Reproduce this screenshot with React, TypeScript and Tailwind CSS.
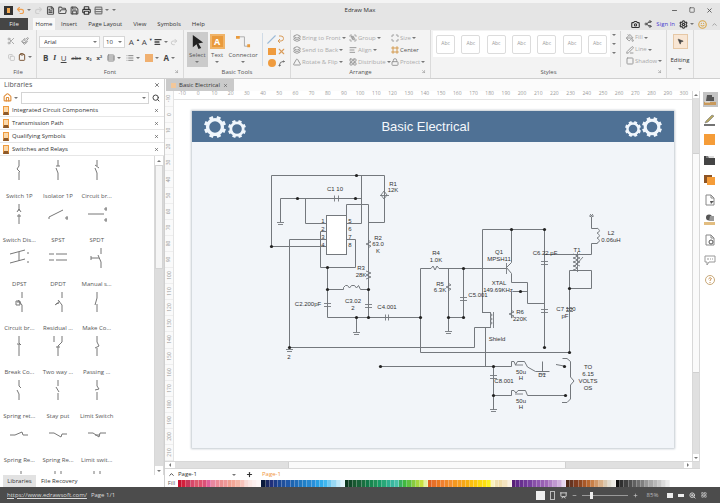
import React from "react";
import {
  AlignLeft, ArrowUpRight, Camera, ChevronUp, Clipboard, Copy, FileText, FolderOpen,
  Frame, Group, Home, Layers, List, LayoutGrid, Lock, Maximize, Minus, MousePointer2,
  Paintbrush, PaintBucket, PenLine, Plus, Presentation, Printer, Redo2, Rows3, Save, Scissors, Search, Settings,
  Share2, Slash, Smile, Spline, Square, Triangle, Undo2, X, ZoomIn,
} from "lucide-react";

type IconType = React.ComponentType<{ size?: number; className?: string; strokeWidth?: number; fill?: string }>;

const Caret = () => (
  <span className="h-0 w-0 shrink-0 border-x-[2px] border-t-[2px] border-x-transparent border-t-[#777]" />
);

const IconBtn = ({ icon: Icon, label, color = "text-[#555]", caret, size = 9 }: {
  icon: IconType; label: string; color?: string; caret?: boolean; size?: number;
}) => (
  <button aria-label={label} className="flex h-3 items-center justify-center gap-[2px]">
    <Icon size={size} className={color} strokeWidth={3} />
    {caret && <Caret />}
  </button>
);

const GroupBox = ({ title, className, corner, children }: {
  title: string; className: string; corner?: boolean; children: React.ReactNode;
}) => (
  <section className={`relative flex flex-col border-r border-[#dadada] ${className}`}>
    <div className="flex h-[37px] items-stretch">{children}</div>
    <h2 className="text-center leading-[10px] text-[#555]">{title}</h2>
    {corner && <ArrowUpRight size={5} className="absolute bottom-1 right-1 rotate-90 text-[#777]" />}
  </section>
);

const TitleBar = () => (
  <header className="relative flex h-[17px] items-center justify-between border-t-[3px] border-[#f4f4f4] bg-[#e5e5e5] px-1">
    <div className="flex items-center gap-[3px]">
      <button aria-label="Application" className="flex h-[9px] w-[9px] items-center justify-center bg-[#333]">
        <span className="h-[5px] w-[3px] bg-[#f5a94e]" />
      </button>
      <IconBtn icon={Undo2} label="Undo" color="text-[#f0a050]" caret />
      <IconBtn icon={Redo2} label="Redo" color="text-[#cfcfcf]" />
      <IconBtn icon={FileText} label="New" />
      <IconBtn icon={FolderOpen} label="Open" />
      <IconBtn icon={Save} label="Save" />
      <IconBtn icon={Printer} label="Print" color="text-[#333]" />
      <IconBtn icon={Rows3} label="Preview" color="text-[#777]" caret />
      <Caret />
    </div>
    <h1 className="absolute left-1/2 -translate-x-1/2 leading-[14px]">Edraw Max</h1>
    <div className="flex items-center gap-[11px] pr-[3px]">
      <IconBtn icon={Minus} label="Minimize" size={7} />
      <IconBtn icon={Square} label="Restore" size={6} />
      <IconBtn icon={X} label="Close" size={7} />
    </div>
  </header>
);

const TabBar = () => (
  <nav className="flex h-[13px] items-end bg-[#e5e5e5]">
    <button className="mr-[5px] h-3 w-7 bg-[#454545] text-[#eee]">File</button>
    <button className="h-3 w-[22px] bg-[#f8f8f8]">Home</button>
    <div className="flex flex-1 gap-[11px] pl-[6px]">
      {["Insert", "Page Layout", "View", "Symbols", "Help"].map((t) => (
        <button key={t} className="h-3">{t}</button>
      ))}
    </div>
    <div className="flex h-3 items-center gap-1 pr-[2px]">
      <IconBtn icon={Camera} label="Capture" color="text-[#333]" />
      <IconBtn icon={Share2} label="Share" size={8} />
      <a href="#signin" className="text-[#4a3ad0]">Sign In</a>
      <IconBtn icon={Settings} label="Settings" color="text-[#333]" caret />
      <IconBtn icon={Smile} label="Feedback" color="text-[#d9a648]" />
      <IconBtn icon={ChevronUp} label="Collapse ribbon" size={7} color="text-[#999]" />
    </div>
  </nav>
);

const FontCell = ({ label, caret, children }: { label: string; caret?: boolean; children: React.ReactNode }) => (
  <button aria-label={label} className="flex h-3 items-center justify-center gap-[2px] text-[8px] leading-3 text-[#444]">
    {children}
    {caret && <Caret />}
  </button>
);

const BigTool = ({ label, active, children }: { label: string; active?: boolean; children: React.ReactNode }) => (
  <button className={`flex h-[35px] flex-col items-center justify-between px-[2px] pb-1 pt-[2px] leading-[7px] text-[#555] ${active ? "bg-[#cbcbcb]" : ""}`}>
    {children}
    <span>{label}</span>
    <Caret />
  </button>
);

const ArrangeItem = ({ icon: Icon, label, on }: { icon: IconType; label: string; on?: boolean }) => (
  <button className={`flex h-3 items-center gap-[1px] whitespace-nowrap ${on ? "text-[#555]" : "text-[#aaa]"}`}>
    <Icon size={8} className={on ? "text-[#d39a4e]" : "text-[#999]"} strokeWidth={3} />
    {label}
    {!on && <Caret />}
  </button>
);

const Ribbon = () => (
  <div className="flex h-[49px] border-b border-[#cfcfcf] bg-[#f3f3f3]">
    <GroupBox title="File" className="w-[37px]">
      <div className="grid flex-1 grid-cols-2 place-items-center gap-y-1 px-1 pb-1 pt-[5px]">
        <IconBtn icon={Scissors} label="Cut" size={8} color="text-[#aaa]" />
        <IconBtn icon={Paintbrush} label="Format painter" size={8} color="text-[#999]" />
        <IconBtn icon={Copy} label="Copy" size={7} color="text-[#c4c4c4]" />
        <IconBtn icon={Clipboard} label="Paste" size={8} caret color="text-[#7d5a3a]" />
      </div>
    </GroupBox>
    <GroupBox title="Font" className="w-[147px]" corner>
      <div className="flex flex-1 flex-col justify-center gap-1 pl-[2px] pr-1 pt-[2px]">
        <div className="flex items-center gap-[3px]">
          <div className="flex h-3 w-[61px] items-center border border-[#d6d6d6] bg-white pr-[2px]">
            <select aria-label="Font" className="w-full appearance-none pl-1 leading-[10px]"><option>Arial</option></select>
            <Caret />
          </div>
          <div className="flex h-3 w-[22px] items-center border border-[#d6d6d6] bg-white pr-[2px]">
            <select aria-label="Font size" className="w-full appearance-none pl-[2px] leading-[10px]"><option>10</option></select>
            <Caret />
          </div>
          <div className="flex flex-1 justify-around">
            <FontCell label="Grow font">A<sup className="text-[4px]">▲</sup></FontCell>
            <FontCell label="Shrink font">A<sup className="text-[4px]">▼</sup></FontCell>
            <FontCell label="Text align" caret><AlignLeft size={8} strokeWidth={4} /></FontCell>
            <IconBtn icon={Redo2} label="Rotate text" color="text-[#ccc]" size={8} />
          </div>
        </div>
        <div className="flex items-center justify-between pl-1 pr-1">
          <FontCell label="Bold"><b>B</b></FontCell>
          <FontCell label="Italic"><i className="font-serif font-bold">I</i></FontCell>
          <FontCell label="Underline"><u>U</u></FontCell>
          <FontCell label="Strikethrough"><s className="text-[6px]">abc</s></FontCell>
          <FontCell label="Subscript"><span className="text-[6px] font-bold">x₂</span></FontCell>
          <FontCell label="Superscript"><span className="text-[6px] font-bold">x²</span></FontCell>
          <IconBtn icon={Rows3} label="Line spacing" caret size={8} color="text-[#888]" />
          <IconBtn icon={List} label="Bullets" caret size={8} color="text-[#888]" />
          <FontCell label="Highlight" caret><span className="h-2 w-2 bg-[#f0b070]" /></FontCell>
          <FontCell label="Font color" caret><b>A</b></FontCell>
        </div>
      </div>
    </GroupBox>
    <GroupBox title="Basic Tools" className="w-[107px]">
      <div className="flex flex-1 pl-[3px] pt-[2px]">
        <BigTool label="Select" active>
          <svg viewBox="0 0 16 16" className="h-[15px] w-[15px]"><path d="M3 1L14 9L9 10L12 15L9 16L7 11L3 14Z" fill="#222" /></svg>
        </BigTool>
        <BigTool label="Text">
          <span className="flex h-[15px] w-[15px] items-center justify-center border-2 border-[#f0b468] bg-[#e99a3c] text-[9px] font-bold text-white">A</span>
        </BigTool>
        <BigTool label="Connector">
          <svg viewBox="0 0 16 16" className="h-[15px] w-[15px]" fill="none" stroke="#aaa">
            <path d="M2 3H9V13H13" />
            <path d="M0 2h4v3H0zM12 11h3v3h-3z" fill="#e99a3c" stroke="none" />
          </svg>
        </BigTool>
        <div className="my-[1px] ml-[2px] grid flex-1 grid-cols-2 place-items-center border-l border-[#d0dbe6] px-1">
          <IconBtn icon={Slash} label="Line" color="text-[#9dbbd8]" />
          <button aria-label="Arc">
            <svg viewBox="0 0 8 8" className="h-2 w-2" fill="none" stroke="#d99c5a"><path d="M2 1H4a2.5 2.5 0 0 1 0 5H1M3 4L1 6L3 8" /></svg>
          </button>
          <button aria-label="Rectangle" className="h-[7px] w-2 bg-[#ef9b3e]" />
          <IconBtn icon={X} label="Point" color="text-[#d99c5a]" />
          <button aria-label="Ellipse" className="h-2 w-2 rounded-full bg-[#ef9b3e]" />
          <IconBtn icon={Spline} label="Curve" size={7} color="text-[#666]" />
        </div>
      </div>
    </GroupBox>
    <GroupBox title="Arrange" className="w-[140px]" corner>
      <div className="grid flex-1 grid-cols-[56px_42px_1fr] pl-[2px] pt-[2px]">
        <ArrangeItem icon={Layers} label="Bring to Front" />
        <ArrangeItem icon={Group} label="Group" />
        <ArrangeItem icon={Maximize} label="Size" />
        <ArrangeItem icon={Layers} label="Send to Back" />
        <ArrangeItem icon={AlignLeft} label="Align" />
        <ArrangeItem icon={Frame} label="Center" on />
        <ArrangeItem icon={Triangle} label="Rotate & Flip" />
        <ArrangeItem icon={LayoutGrid} label="Distribute" />
        <ArrangeItem icon={Lock} label="Protect" />
      </div>
    </GroupBox>
    <GroupBox title="Styles" className="min-w-[236px] flex-1" corner>
      <div className="flex flex-1 pl-[2px] pt-[1px]">
        <div className="flex h-[26px] flex-1 items-center justify-around bg-white">
          {[1, 2, 3, 4, 5, 6, 7].map((n) => (
            <button key={n} aria-label={`Style ${n}`} className="h-[19px] w-[19px] rounded-[2px] border border-[#dcdcdc] text-[5px] text-[#999]">Abc</button>
          ))}
        </div>
        <div className="flex h-[26px] w-2 flex-col items-center justify-around">
          <Caret /><Caret /><Caret />
        </div>
        <div className="ml-[2px] flex w-[46px] flex-col border-l border-[#d6d6d6] pl-[5px] pt-[1px]">
          <ArrangeItem icon={PaintBucket} label="Fill" />
          <ArrangeItem icon={PenLine} label="Line" />
          <ArrangeItem icon={Square} label="Shadow" />
        </div>
      </div>
    </GroupBox>
    <div className="w-[27px] border-r border-[#dadada] pt-1">
      <button className="flex w-full flex-col items-center">
        <span className="flex h-[15px] w-[15px] items-center justify-center border border-[#e6c8a6] bg-[#f8e6d4]">
          <MousePointer2 size={7} fill="currentColor" className="text-[#444]" />
        </span>
        <span className="mb-1 mt-[7px] leading-2">Editing</span>
        <Caret />
      </button>
    </div>
    <div className="w-[26px]" />
  </div>
);

const libraries = ["Integrated Circuit Components", "Transmission Path", "Qualifying Symbols", "Switches and Relays"];

const symbols: [string, string][] = [
  ["Switch 1P", "M10 0V6L8 9L11 12M10 12V20"],
  ["Isolator 1P", "M10 0V6M8 6h4M8 8L10 13V20"],
  ["Circuit br...", "M10 0V6M8 5l4 3M8 8L10 13V20"],
  ["Switch Dis...", "M10 0V7M8 8l2-3 2 3M10 10V20M8 12h4"],
  ["SPST", "M1 13L15 6M0 14h2M18 13h2v2h-2z"],
  ["SPDT", "M1 10H17M18 4h2v2h-2zM18 15h2v2h-2z"],
  ["DPST", "M1 6L16 2M1 15L16 11M18 5h2M18 14h2M10 4v9"],
  ["DPDT", "M1 6h5M8 6h11M1 12h5M8 12h11"],
  ["Manual s...", "M14 0V6M14 14V20M14 14L11 7M4 10h8M4 8v4"],
  ["Circuit br...", "M13 0V6M13 13V20M13 13L9 8M7 9h4v4h-4zM8 10h3v2"],
  ["Residual ...", "M14 0V6M14 13V20M14 13L10 8M7 13L12 9M8 12l3-1"],
  ["Make Co...", "M10 0V6M10 6L8 13M10 12V20"],
  ["Break Co...", "M10 0V7L12 9M10 8V20M8 8h3"],
  ["Two way ...", "M6 0V6M14 0V6L10 10V20M8 11h4"],
  ["Passing ...", "M10 0V6M10 6L12 10L8 12M10 12V20"],
  ["Spring ret...", "M10 0V6L12 8M8 10L10 14V20"],
  ["Stay put", "M10 0V6M8 7L11 12M10 13V20"],
  ["Limit Switch", "M10 0V6L12 9L8 10M10 12V20"],
  ["Spring Re...", "M1 11H6L13 8L14 11H19"],
  ["Spring Re...", "M1 9H6L13 13L14 10H19"],
  ["Limit swit...", "M1 9H6L12 13L13 9H19M8 11h5"],
];

const partialSymbols = ["M12 6v3", "M7 6v3M13 6v3", "M7 6v3M13 6v3"];

const LibraryPanel = () => (
  <aside className="flex w-[165px] shrink-0 flex-col border-r border-[#cfcfcf] bg-white">
    <div className="flex h-3 items-center justify-between pl-1 pr-[4px]">
      <h2 className="text-[7px] text-[#555]">Libraries</h2>
      <IconBtn icon={X} label="Close panel" size={6} />
    </div>
    <div className="flex h-[13px] items-center gap-[3px] pl-[3px] pr-1">
      <IconBtn icon={Home} label="Library home" size={9} color="text-[#e08f3c]" caret />
      <div className="flex h-3 flex-1 items-center border border-[#d4d4d4] pr-[2px]">
        <input aria-label="Search libraries" className="w-full min-w-0 bg-transparent px-1 outline-none" />
        <Caret />
      </div>
      <IconBtn icon={Search} label="Search" size={8} color="text-[#444]" />
    </div>
    {libraries.map((l) => (
      <div key={l} className="flex h-[13px] shrink-0 items-center gap-[3px] border-b border-[#e6e6e6] pl-[3px] pr-[5px]">
        <span className="h-[9px] w-[6px] shrink-0 border border-b-[3px] border-[#ef9b3e] border-b-[#8d5a2b] bg-[#fbd9ac]" />
        <button className="flex-1 text-left">{l}</button>
        <IconBtn icon={X} label={`Close ${l}`} size={5} />
      </div>
    ))}
    <div className="flex min-h-0 flex-1">
      <div className="flex-1 overflow-hidden pt-[1px]">
        <div className="grid w-[116px] auto-rows-[44px] grid-cols-3">
          {symbols.map(([name, d], i) => (
            <button key={i} className="flex flex-col items-center justify-between pb-[1px] pt-[3px] text-[#555]">
              <svg viewBox="0 0 20 20" className="h-5 w-5" fill="none" stroke="#777"><path d={d} /></svg>
              <span className="whitespace-nowrap leading-2">{name}</span>
            </button>
          ))}
        </div>
        <div className="grid h-[10px] w-[116px] grid-cols-3 justify-items-center">
          {partialSymbols.map((d, i) => (
            <svg key={i} viewBox="0 0 20 10" className="h-[10px] w-5" fill="none" stroke="#777"><path d={d} /></svg>
          ))}
        </div>
      </div>
      <div className="flex w-[10px] flex-col border-x border-[#d8d8d8] bg-[#dddddd]">
        <button aria-label="Scroll up" className="flex h-[9px] items-center justify-center bg-white"><span className="flex rotate-180"><Caret /></span></button>
        <div className="h-[104px] border border-[#d4d4d4] bg-[#f5f5f5]" />
        <div className="flex-1" />
        <button aria-label="Scroll down" className="flex h-[9px] items-center justify-center bg-white"><Caret /></button>
      </div>
    </div>
    <div className="flex h-3 text-[#333]">
      <button className="ml-[3px] w-[33px] bg-[#e2e2e2]">Libraries</button>
      <button className="px-[5px]">File Recovery</button>
    </div>
  </aside>
);

const Gears = ({ mirror }: { mirror?: boolean }) => {
  const gears = mirror ? [[13, 16, 9], [32, 14, 11]] : [[12, 14, 12], [34, 16, 10]];
  return (
    <svg viewBox="0 0 44 28" className="h-7 w-11" fill="none" stroke="#f0f6fc">
      {gears.map(([x, y, r]) => (
        <g key={x}>
          {[22, 67, 112, 157].map((a) => (
            <path key={a} d={`M${x} ${y - r + 1}V${y - r + 4}M${x} ${y + r - 1}V${y + r - 4}`} strokeWidth={r / 3} transform={`rotate(${a} ${x} ${y})`} />
          ))}
          <circle cx={x} cy={y} r={r * 0.62} strokeWidth={r * 0.28} />
        </g>
      ))}
    </svg>
  );
};

const wires = [
  "M271.5 246.5V175.5H384.5V222.5H368.5", "M270.5 246.5H326", "M280.5 222V198.5H361.5", "M305.5 198.5V223.5H326",
  "M361.5 175.5V223.5H347", "M346.5 215.5V204.5H368.5V318", "M326 231.5H320.5V267.5H355.5V239.5H347",
  "M326 239.5H289.5V347.5H474.5V327.5H490.5", "M327.5 267.5V317.5H420.5", "M327.5 289.5H343.5V287.5L345.5 285.5H347.5L349.5 288L351.5 285.5H354.5L356.5 288L358.5 285.5L360.5 289.5H368.5",
  "M356.5 317.5V332", "M420.5 352.5V268.5H431L433 266L435 270L437 266L439 268.5H506", "M420.5 352.5H569.5V270.5H591.5V288.5H569.5",
  "M448.5 268.5V331", "M463.5 268.5V317.5H448.5", "M482.5 313V229.5H544.5V347", "M482.5 312.5H490.5",
  "M485.5 327.5V366.5", "M511.5 229.5V262.5L506.5 267.5L511.5 273.5V282.5H527.5V303.5H544.5",
  "M544.5 254.5H591.5V243.5H597.5M597.5 228.5H591.5V217", "M512.5 291.5H527.5M511.5 291.5V318",
  "M380.5 366.5H511.5V361.5H514L515.5 365L517.5 361.5H522L524.5 361.5L527.5 367L535.5 371.5H549.5M542.5 361.5V371.5",
  "M493.5 366.5V410", "M493.5 395.5H511.5V390.5H514L516 393L518 390.5H525.5L527.5 395.5H565", "M556 364.5L564 366",
  "M562.5 358.5H567L570.5 361.5V377L574 381L570.5 385V399L567 402.5H562",
];
const parts = [
  "M334.5 195.5V201.5M338.5 195.5V201.5", "M324 303.5H331M324 306.5H331", "M365 304.5H372M365 307.5H372", "M385.5 314.5V320.5M388.5 314.5V320.5",
  "M460 297.5H467M460 300.5H467", "M541 261.5H548M541 264.5H548", "M541 309.5H548M541 312.5H548", "M566 308.5H573M566 311.5H573", "M490 375.5H497M490 378.5H497",
  "M277 222.5H284M278 224.5H283", "M353 332.5H360M354 334.5H359", "M445 331.5H452M446 333.5H451", "M490 409.5H497M491 411.5H496", "M286 349.5H293M287 351.5H292",
  "M368 240l3 2-5 2 5 2-3 2", "M366 271l5 2-5 2 5 2-5 2", "M448 283l3 2-5 2 5 2-3 2", "M511 310l3 2-5 2 5 2-3 2", "M384 191l3 4-3 4-3-4zM380 195.5h9",
  "M490.5 312V328M490 313q4 2 0 4q4 2 0 4q4 2 0 4M493.5 312V328", "M597 228q5 3 0 5q5 3 0 5q5 3 0 5",
  "M573 254q8 2 0 4q8 2 0 4q8 2 0 4q8 2 0 4M577.5 252V272M575 266L583 257M580 254q-6 2 0 4q-6 2 0 4q-6 2 0 4",
  "M506.5 263V274M589 216h5M590 214l3 3M593 214l-3 3M539 374h7M515 365h8M515 394h8",
];
const dots = [
  [356, 175], [271, 246], [297, 198], [355, 198], [327, 267], [327, 289], [368, 289], [356, 317], [368, 317], [420, 317], [289, 347],
  [448, 317], [463, 317], [463, 268], [511, 229], [544, 229], [544, 347], [569, 288], [569, 352], [520, 291], [380, 366], [493, 366], [493, 395],
  [564, 366], [565, 395],
];
const labels: [number, number, string][] = [
  [393, 184, "R1"], [393, 190, "12K"], [335, 189, "C1 10"], [378, 238, "R2"], [378, 244, "63.0"], [378, 251, "K"], [361, 268, "R3"], [361, 275, "28K"],
  [308, 304, "C2.200pF"], [353, 301, "C3.02"], [353, 308, "2"], [387, 307, "C4.001"], [436, 253, "R4"], [436, 260, "1.0K"], [440, 284, "R5"],
  [440, 290, "6.3K"], [478, 295, "C5.001"], [499, 252, "Q1"], [499, 259, "MPSH11"], [499, 283, "XTAL"], [498, 290, "149.69KHz"], [520, 312, "R6"],
  [520, 319, "220K"], [497, 339, "Shield"], [545, 253, "C6.22 pF"], [577, 250, "T1"], [611, 233, "L2"], [611, 240, "0.06uH"], [566, 309, "C7 100"],
  [565, 316, "pF"], [521, 372, "50u"], [521, 378, "H"], [542, 375, "D1"], [504, 381, "C8.001"], [521, 401, "50u"], [521, 407, "H"], [588, 367, "TO"],
  [588, 374, "6.15"], [588, 381, "VOLTS"], [588, 388, "OS"], [323, 221, "1"], [323, 229, "2"], [323, 237, "3"], [323, 245, "4"], [350, 221, "5"],
  [350, 229, "6"], [350, 237, "7"], [350, 245, "8"], [289, 357, "2"],
];

const Circuit = () => (
  <svg viewBox="192 142 482 306" className="block w-full" role="img" aria-label="Basic electrical circuit">
    <g fill="none" stroke="#74787d">
      {wires.map((d) => <path key={d} d={d} />)}
      {parts.map((d) => <path key={d} d={d} strokeWidth="0.9" />)}
    </g>
    <rect x="326.5" y="215.5" width="20" height="39" fill="#fff" stroke="#74787d" />
    {dots.map(([x, y]) => <circle key={`${x}-${y}`} cx={x + 0.5} cy={y + 0.5} r="1.6" fill="#222" />)}
    <g fill="#333" textAnchor="middle" fontFamily="Liberation Sans, Arial, sans-serif" fontSize="6">
      {labels.map(([x, y, t]) => <text key={`${x}-${y}`} x={x} y={y + 2}>{t}</text>)}
    </g>
  </svg>
);

const hTicks = Array.from({ length: 32 }, (_, i) => (i - 1) * 10);
const vTicks = Array.from({ length: 23 }, (_, i) => (i - 1) * 10);

const swatches = [
  ["#c8102e", "#d3203c", "#c8385a", "#d8486a", "#dc5a6c", "#e0506e", "#dc5078", "#e0609a", "#e888a0", "#ec8c98", "#ec9090", "#f09898", "#f0a090", "#f4a898", "#f4b8a8", "#f8c4bc", "#f8dcd8", "#fbe8e4", "#fcefee", "#fdf6f5"],
  ["#0a1a3c", "#1a2860", "#20307c", "#1c3c88", "#1c4894", "#20509c", "#2058a8", "#1c64b0", "#206cb8", "#2078c0", "#2080c8", "#2888d0", "#2890dc", "#28a0e4", "#30acec", "#40b8f0", "#70c8f0", "#98d8f4", "#c0e8f8", "#e0f4fc"],
  ["#0c3820", "#104828", "#185830", "#186038", "#187040", "#107848", "#188850", "#209058", "#189c68", "#28a878", "#30b090", "#38b8a0", "#48c0a8", "#38b060", "#40b840", "#60c040", "#88cc40", "#a8d840", "#c8e040", "#e4f0a0"],
  ["#e06020", "#e87028", "#ec7820", "#f08030", "#f08828", "#f49030", "#f49820", "#f8a020", "#f8a818", "#f8b010", "#fcc010", "#fcc810", "#fcd810", "#fce010", "#fcf020", "#fbf3c0", "#f0e0b0", "#f0dca8", "#f4e4c0", "#faf0e0"],
  ["#582078", "#602888", "#683090", "#703898", "#7840a0", "#8850a8", "#9058b0", "#9860b4", "#a068b8", "#b080c4", "#c098d0", "#d0b0dc", "#e8d8f0"],
  ["#502818", "#683420", "#803c20", "#904820", "#a85828", "#b86830", "#c88048", "#d09868", "#d8b088", "#d8c8b0", "#e0dcd0", "#eceae4"],
  ["#101010", "#303030", "#404040", "#505050", "#606060", "#707070", "#808080", "#989898", "#a8a8a8", "#b8b8b8", "#c8c8c8", "#dcdcdc", "#ececec"],
].flat();

const Workspace = () => (
  <main className="flex min-w-0 flex-1 flex-col bg-white">
    <div className="flex h-3 bg-[#fbfbfb] pl-[1px]">
      <button className="flex h-3 w-[68px] items-center gap-[3px] bg-[#cacaca] pl-[5px]">
        <span className="h-[5px] w-[5px] bg-[#f2c79a]" />
        <span className="whitespace-nowrap">Basic Electrical</span>
        <X size={5} />
      </button>
    </div>
    <div className="flex min-h-0 flex-1 overflow-hidden">
      <div className="flex w-[9px] flex-col border-r border-[#e4e4e4] bg-[#fafafa] text-[5px] leading-[5px] text-[#999]">
        {vTicks.map((t) => (
          <span key={t} className="flex min-h-0 flex-1 items-center justify-center border-b border-[#eee]">
            <span className="-rotate-90">{t}</span>
          </span>
        ))}
      </div>
      <div className="min-w-0 flex-1">
        <div className="flex h-[9px] border-b border-[#e4e4e4] text-[5px] leading-[5px] text-[#999]">
          {hTicks.map((t) => <span key={t} className="w-px flex-1 text-center">{t}</span>)}
        </div>
        <div className="px-[18px] pt-[11px]">
          <article className="bg-[#f2f5f9] shadow-[0_0_2px_1px_#c4cad0]">
            <div className="flex h-[31px] items-center justify-between bg-[#4f7195] pl-[11px] pr-[10px] font-[Liberation_Sans,Arial,sans-serif]">
              <Gears />
              <h2 className="pr-4 text-[13px] text-[#f4f8fc]">Basic Electrical</h2>
              <Gears mirror />
            </div>
            <Circuit />
          </article>
        </div>
      </div>
      <div className="flex w-2 flex-col border-x border-[#d8d8d8] bg-[#e0e0e0]">
        <button aria-label="Scroll canvas up" className="flex h-[7px] items-center justify-center bg-white"><span className="flex rotate-180"><Caret /></span></button>
        <div className="h-[55px]" />
        <div className="h-[220px] border-y border-[#d0d0d0] bg-[#fafafa]" />
        <div className="flex-1" />
        <button aria-label="Scroll canvas down" className="flex h-[7px] items-center justify-center bg-white"><Caret /></button>
      </div>
    </div>
    <div className="flex h-2 w-full border-y border-[#d8d8d8] bg-[#e0e0e0] pr-2">
      <button aria-label="Scroll canvas left" className="flex w-[10px] items-center justify-center bg-white"><span className="flex rotate-90"><Caret /></span></button>
      <div className="flex-[113]" />
      <div className="flex-[276] border-x border-[#d0d0d0] bg-[#fafafa]" />
      <div className="flex-[118]" />
      <button aria-label="Scroll canvas right" className="flex w-2 items-center justify-center bg-white"><span className="flex -rotate-90"><Caret /></span></button>
    </div>
    <div className="flex h-[11px] items-center">
      <span className="flex w-[13px] justify-center"><ChevronUp size={7} strokeWidth={3} /></span>
      <button className="flex w-[58px] items-center justify-between">Page-1 <Caret /></button>
      <span className="flex w-[26px] justify-center"><Plus size={7} strokeWidth={4} /></span>
      <button className="text-[#f0953e]">Page-1</button>
    </div>
    <div className="flex h-[7px] items-stretch pr-[30px]">
      <button className="w-[13px] leading-[7px] text-[#666]">Fill</button>
      {swatches.map((c, i) => (
        <button key={i} aria-label={`Colour ${c}`} className="w-px flex-1 border-r border-white/30" style={{ backgroundColor: c }} />
      ))}
    </div>
  </main>
);

const pageShape = <path d="M2 1H7L10 4V11H2ZM7 1V4H10" fill="#fff" stroke="#888" />;

const sideTools: [string, React.ReactNode][] = [
  ["Theme", <><path d="M3 1H8V3H10V7H2Z" fill="#555" /><path d="M0 8H12V11H0Z" fill="#c99a5c" /><path d="M1 8H6" stroke="#eee" /></>],
  ["Line", <><path d="M1 9L4 8L10 2L8 1L2 7Z" fill="#b8a860" stroke="#777" strokeWidth=".6" /><path d="M0 11H11" stroke="#444" strokeWidth="1.5" /></>],
  ["Fill", <path d="M0 0H11V11H0Z" fill="#f59c38" />],
  ["Picture", <><path d="M0 2H4L5 4H11V11H0Z" fill="#444" /><path d="M2 3H10" stroke="#bbb" /></>],
  ["Layers", <><path d="M0 1H8V9H0Z" fill="#8d5424" /><path d="M3 3H11V11H3Z" fill="#f59c38" /></>],
  ["Page", <>{pageShape}<path d="M6 7L10 7L7 10Z" fill="#555" /></>],
  ["Clipart", <><circle cx="5" cy="3.5" r="3" fill="#555" /><path d="M6 2H10V7H5Z" fill="#999" /><path d="M0 8H11V11H0Z" fill="#e2bd80" /></>],
  ["Hyperlink", <>{pageShape}<circle cx="7" cy="8" r="2" stroke="#555" /></>],
  ["Comment", <path d="M1 2H11V8H5L3 11V8H1ZM3 5H5M6 5H7M8 5H9" stroke="#999" />],
  ["Help", <><circle cx="6" cy="6" r="4.5" stroke="#c8a878" /><path d="M4.5 5Q6 2.5 7.5 4.5Q6 6 6 7M6 8V9" stroke="#c89050" /></>],
];

const SideBar = () => (
  <aside className="flex w-5 shrink-0 flex-col items-center gap-[5px] bg-white pt-[13px]">
    {sideTools.map(([label, art], i) => (
      <button key={label} aria-label={label} className={`flex h-[15px] w-[15px] items-center justify-center ${i === 0 ? "bg-[#c4c4c4]" : ""}`}>
        <svg viewBox="0 0 12 12" className="h-3 w-3" fill="none">{art}</svg>
      </button>
    ))}
  </aside>
);

const StatusBar = () => (
  <footer className="flex h-4 shrink-0 items-center justify-between bg-[#4c4c4c] pl-[7px] pr-[13px] text-[#ddd]">
    <div className="flex gap-1">
      <a href="#home" className="underline">https://www.edrawsoft.com/</a>
      <span>Page 1/1</span>
    </div>
    <div className="flex items-center gap-[5px]">
      <button aria-label="Normal view" className="-mr-1 h-[9px] w-[9px] bg-[#eee]" />
      <button aria-label="Page view" className="ml-1 h-[9px] w-[5px] border border-[#bbb]" />
      <IconBtn icon={Presentation} label="Presentation" color="text-[#ddd]" size={7} />
      <IconBtn icon={Minus} label="Zoom out" color="text-[#ccc]" size={5} />
      <input type="range" aria-label="Zoom" min={0} max={100} defaultValue={18}
        className="h-[7px] w-[46px] appearance-none bg-[linear-gradient(#999,#999)] bg-[length:100%_1px] bg-center bg-no-repeat [&::-webkit-slider-thumb]:h-[7px] [&::-webkit-slider-thumb]:w-[3px] [&::-webkit-slider-thumb]:appearance-none [&::-webkit-slider-thumb]:bg-[#eee]" />
      <IconBtn icon={Plus} label="Zoom in" color="text-[#ccc]" size={5} />
      <span className="w-[19px] text-center text-[#bbb]">85%</span>
      <button aria-label="Fit page" className="h-[5px] w-[6px] bg-[#eee]" />
      <button aria-label="Fit width" className="h-[3px] w-[6px] bg-[#eee]" />
      <IconBtn icon={ZoomIn} label="Zoom area" color="text-[#ddd]" size={7} />
      <IconBtn icon={LayoutGrid} label="Grid" color="text-[#bbb]" size={6} />
    </div>
  </footer>
);

export default function App() {
  return (
    <div className="flex h-screen flex-col bg-[#f3f3f3] font-[Open_Sans,Noto_Sans,sans-serif] text-[6px] text-[#333]">
      <TitleBar />
      <TabBar />
      <Ribbon />
      <div className="flex min-h-0 flex-1">
        <LibraryPanel />
        <Workspace />
        <SideBar />
      </div>
      <StatusBar />
    </div>
  );
}
